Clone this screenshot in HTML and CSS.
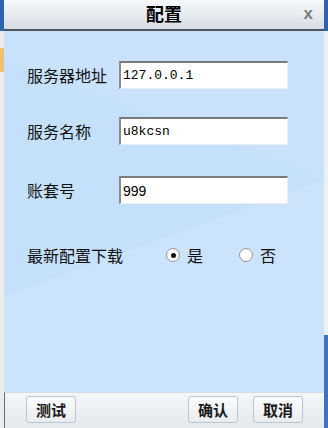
FILE: index.html
```html
<!DOCTYPE html>
<html>
<head>
<meta charset="utf-8">
<link rel="stylesheet" href="styles.css">
</head>
<body>
<div class="screen">
  <div class="side side-left">
    <div class="side-top"></div>
    <div class="side-left-mid">
      <span class="bit bit-yellow"></span>
    </div>
  </div>
  <div class="dialog">
    <div class="titlebar">
      <span class="title">配置</span>
      <span class="close">x</span>
    </div>
    <div class="content">
      <div class="row row-1">
        <span class="label">服务器地址</span>
        <span class="input mono">127.0.0.1</span>
      </div>
      <div class="row row-2">
        <span class="label">服务名称</span>
        <span class="input mono">u8kcsn</span>
      </div>
      <div class="row row-3">
        <span class="label">账套号</span>
        <span class="input sans">999</span>
      </div>
      <div class="row row-radio">
        <span class="label">最新配置下载</span>
        <span class="radios">
          <span class="radio checked"></span><span class="radio-text">是</span>
          <span class="radio"></span><span class="radio-text">否</span>
        </span>
      </div>
    </div>
    <div class="footer">
      <span class="btn">测试</span>
      <span class="spacer"></span>
      <span class="btn">确认</span>
      <span class="btn">取消</span>
    </div>
  </div>
  <div class="side side-right">
    <div class="side-top"></div>
    <div class="side-right-mid"></div>
    <div class="side-right-bottom"></div>
  </div>
</div>
</body>
</html>
```
FILE: styles.css
```css
html, body {
  margin: 0;
  padding: 0;
  background: #e6e6e6;
}
.screen {
  width: 328px;
  height: 428px;
  display: flex;
  overflow: hidden;
  font-family: "Noto Sans CJK SC", "Liberation Sans", sans-serif;
}
.side {
  width: 4px;
  display: flex;
  flex-direction: column;
}
.side-top {
  height: 31px;
  background: #2d64b0;
}
.side-left-mid {
  flex: 1;
  background: #ececec;
  display: flex;
  flex-direction: column;
}
.bit-yellow {
  display: block;
  margin-top: 17px;
  height: 24px;
  background: #f0c070;
}
.side-right-mid {
  height: 304px;
  background: #eef1f4;
}
.side-right-bottom {
  flex: 1;
  background: #3b74c0;
}
.dialog {
  width: 320px;
  height: 428px;
  display: flex;
  flex-direction: column;
}
.titlebar {
  height: 31px;
  box-sizing: border-box;
  border-bottom: 2px solid #4a5561;
  background: linear-gradient(#f6f8fa, #e4e9ee 60%, #d6dce3);
  display: flex;
  align-items: flex-start;
  justify-content: center;
  position: relative;
}
.title {
  font-size: 18px;
  font-weight: bold;
  color: #000;
  line-height: 26px;
}
.close {
  position: absolute;
  right: 11px;
  top: 5px;
  font-family: "Liberation Sans", sans-serif;
  font-weight: bold;
  font-size: 17px;
  line-height: 18px;
  color: #7d7d7d;
}
.content {
  height: 361px;
  background:
    linear-gradient(160deg, rgba(255,255,255,0) 55%, rgba(255,255,255,0.12) 56%, rgba(255,255,255,0.12) 100%),
    linear-gradient(200deg, rgba(255,255,255,0.08) 30%, rgba(255,255,255,0) 31%),
    #c5e0fb;
  padding: 30px 0 0 23px;
  box-sizing: border-box;
  display: flex;
  flex-direction: column;
}
.row {
  display: flex;
  align-items: center;
}
.row-2 { margin-top: 28px; }
.row-3 { margin-top: 31px; }
.row-radio { margin-top: 39px; }
.label {
  width: 92px;
  font-size: 16px;
  line-height: 22px;
  color: #111;
  white-space: nowrap;
}
.input {
  width: 169px;
  height: 28px;
  box-sizing: border-box;
  background: #fff;
  border-top: 2px solid #7a7a7a;
  border-left: 2px solid #8a8a8a;
  border-right: 1px solid #e8eef4;
  border-bottom: 1px solid #e8eef4;
  padding-left: 2px;
  display: flex;
  align-items: center;
  color: #000;
}
.mono {
  font-family: "Liberation Mono", monospace;
  font-size: 13px;
}
.sans {
  font-family: "Liberation Sans", sans-serif;
  font-size: 14px;
}
.radios {
  display: flex;
  align-items: center;
  margin-left: 47px;
}
.radio {
  width: 14px;
  height: 14px;
  border-radius: 50%;
  box-sizing: border-box;
  border: 1px solid #9a9a9a;
  background: radial-gradient(circle, #fff 50%, #e4e4e4 100%);
  display: flex;
  align-items: center;
  justify-content: center;
}
.radio.checked::after {
  content: "";
  width: 5px;
  height: 5px;
  border-radius: 50%;
  background: #111;
}
.radio-text {
  font-size: 16px;
  color: #111;
  margin-left: 7px;
  margin-right: 36px;
}
.footer {
  flex: 1;
  background: linear-gradient(#f3f5f7, #e6e9ec);
  border-top: 1px solid #d4dbe2;
  border-left: 1px solid #6a6f75;
  display: flex;
  align-items: flex-start;
  padding: 3px 21px 0 21px;
}
.spacer { flex: 1; }
.btn {
  width: 50px;
  height: 27px;
  box-sizing: border-box;
  border: 1px solid #b8c6d4;
  border-radius: 3px;
  background: linear-gradient(#fafbfc, #e9ecef);
  font-size: 15px;
  line-height: 25px;
  text-align: center;
  color: #1a1a1a;
  font-weight: bold;
}
.btn + .btn { margin-left: 15px; }
```
